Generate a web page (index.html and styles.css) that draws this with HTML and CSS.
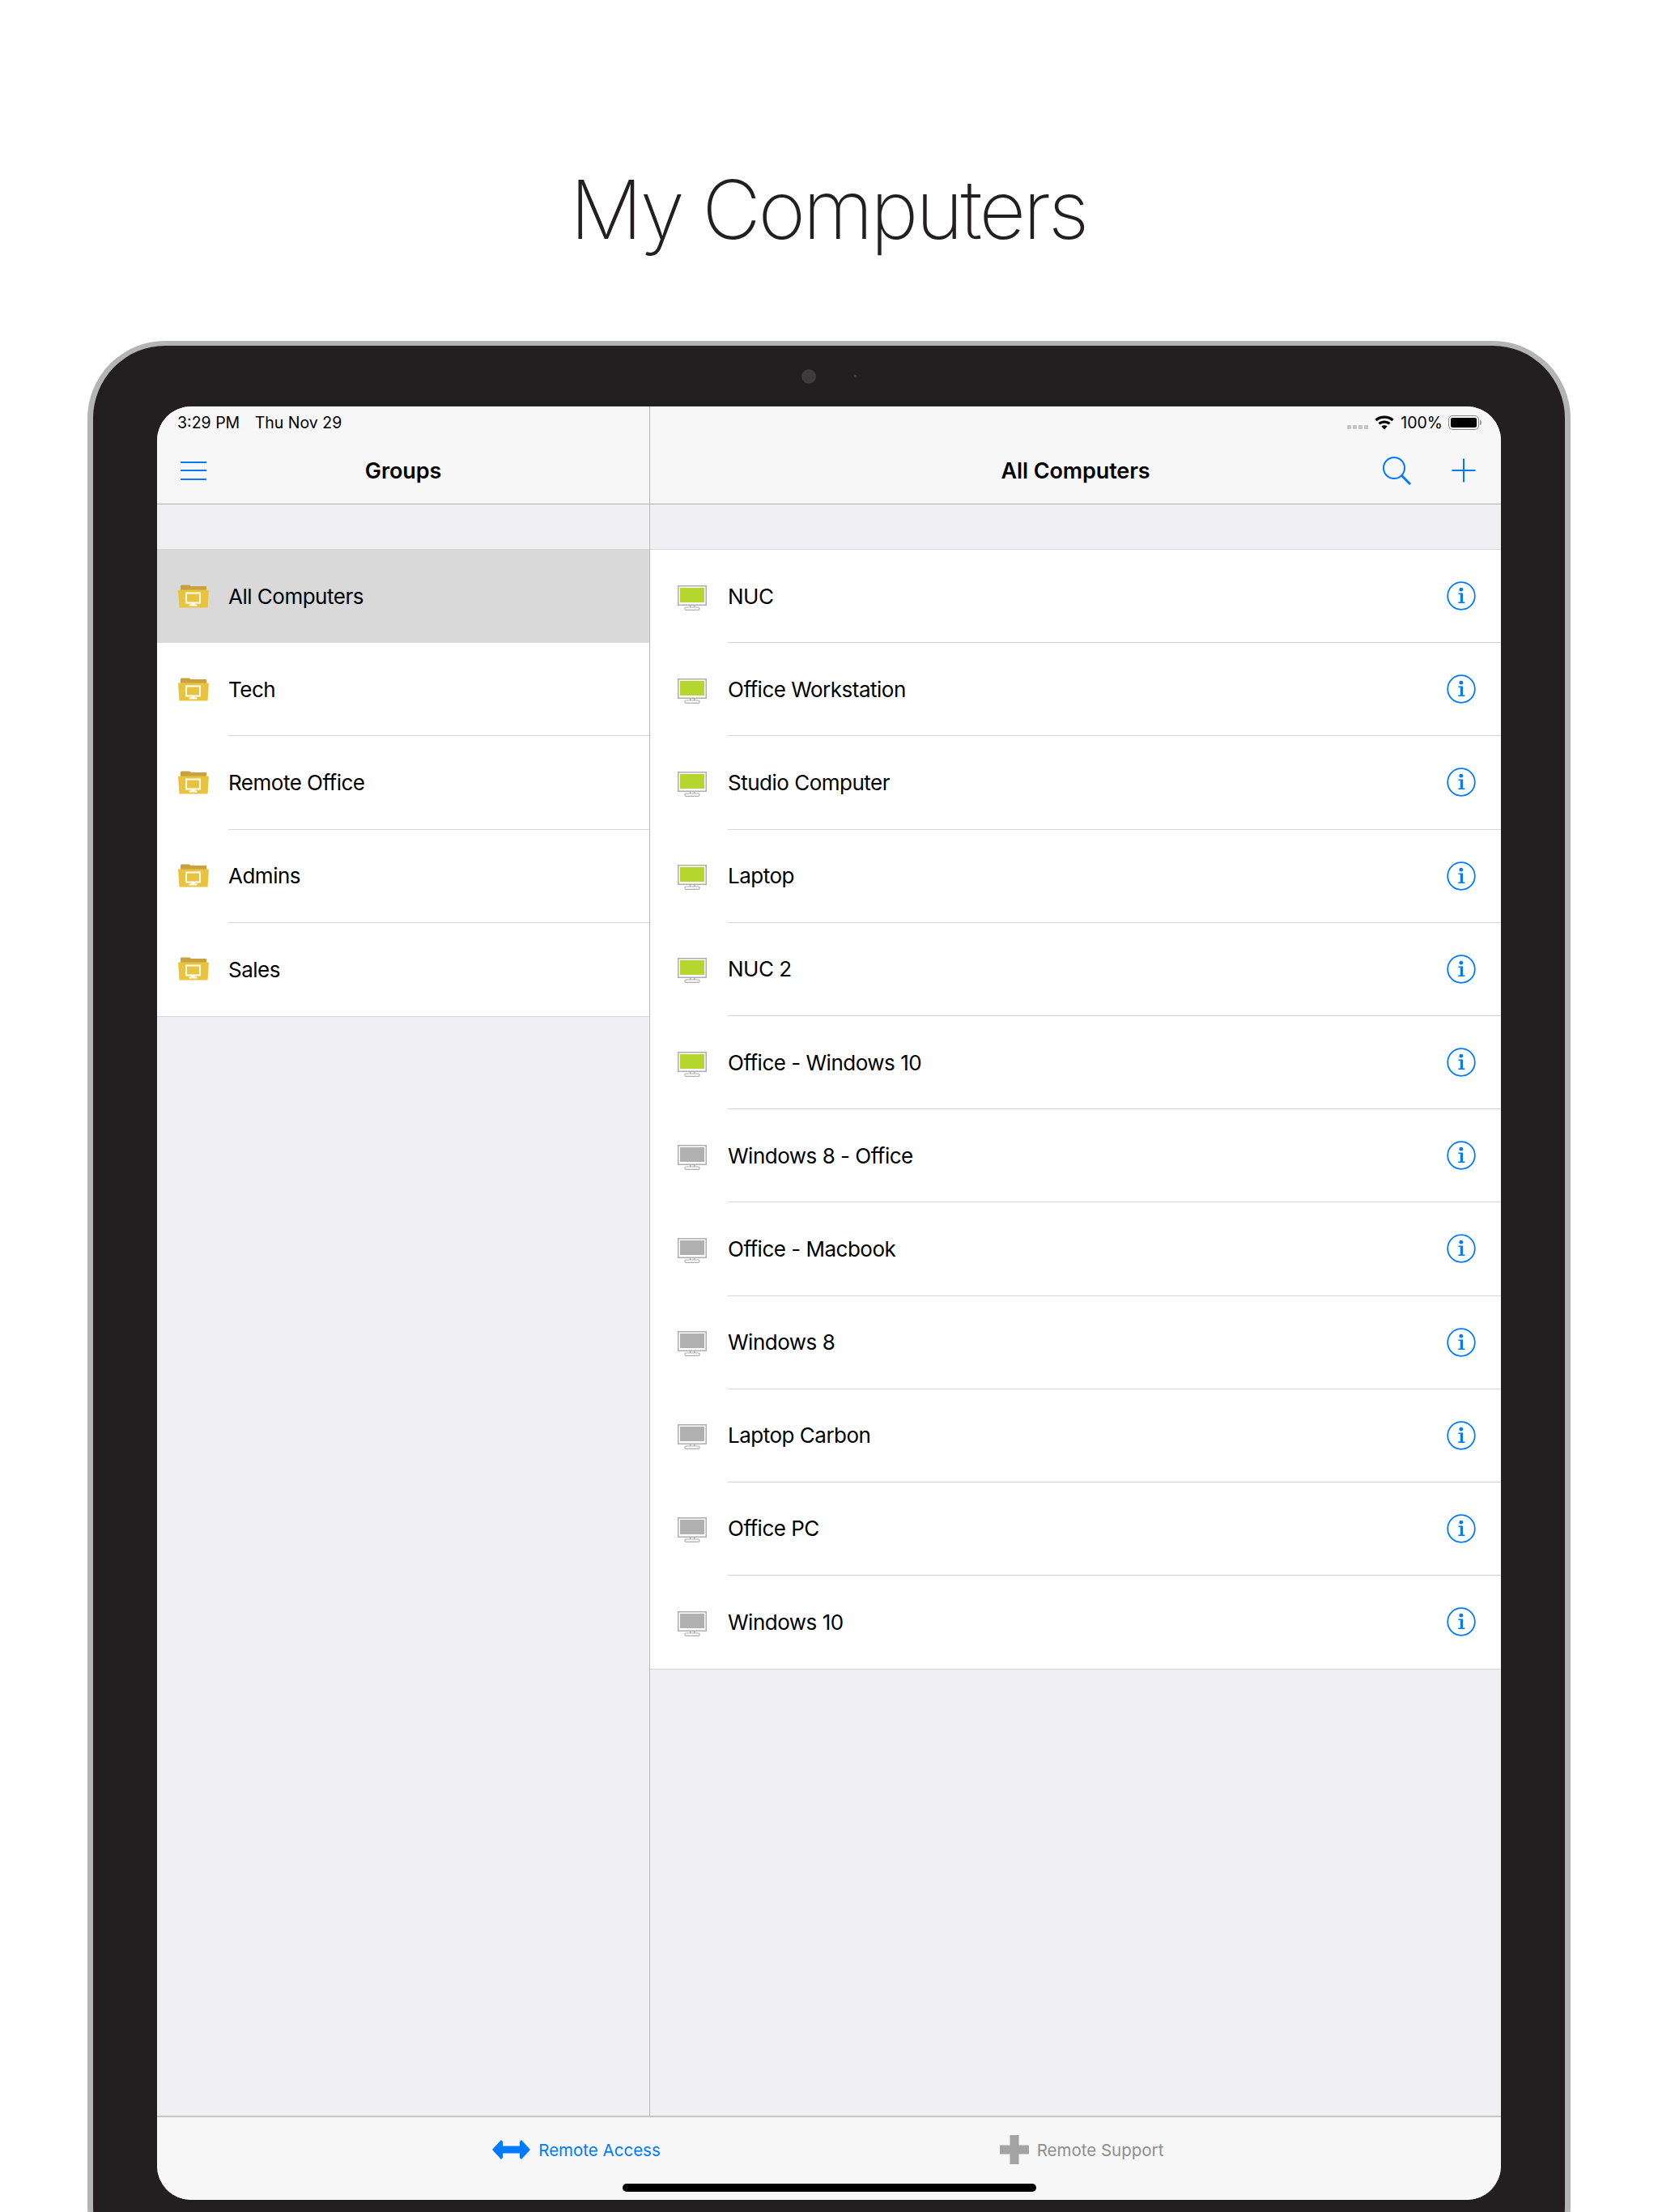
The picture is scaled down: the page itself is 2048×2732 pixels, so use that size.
FILE: index.html
```html
<!DOCTYPE html>
<html lang="en">
<head>
    <meta charset="UTF-8">
    <meta name="viewport" content="width=device-width, initial-scale=1.0">
    <title>My Computers</title>
    <link rel="stylesheet" href="styles.css">
</head>
<body>
    <!-- Shared icons -->
    <svg class="defs" width="0" height="0">
        <symbol id="monitor" viewBox="0 0 36 31">
            <rect x="0.75" y="0.75" width="34.5" height="23.5" fill="#fff" stroke="#aeaeae" stroke-width="1.5"/>
            <rect x="3" y="3" width="30" height="18" fill="currentColor"/>
            <rect x="15" y="25" width="1.5" height="3" fill="#aeaeae"/>
            <rect x="20" y="25" width="1.5" height="3" fill="#aeaeae"/>
            <rect x="9" y="27" width="18" height="3.4" rx="1.5" fill="#fff" stroke="#aeaeae" stroke-width="1.2"/>
        </symbol>
        <symbol id="folder" viewBox="0 0 38 30">
            <path d="M3 8V1.5L4 0.5H14L16 2H35V8Z" fill="#c9a23f"/>
            <path d="M0 6.5H38L36.5 28.5H1.5Z" fill="#e9c33d"/>
            <rect x="10" y="10.5" width="17" height="12" fill="#e9c33d" stroke="#fff" stroke-width="2"/>
            <rect x="16.5" y="23" width="4" height="2" fill="#fff"/>
            <rect x="13.5" y="24.5" width="10" height="2" fill="#fff"/>
        </symbol>
        <symbol id="info" viewBox="0 0 36 36">
            <circle cx="18" cy="18" r="16.8" fill="none" stroke="currentColor" stroke-width="1.8"/>
            <circle cx="17.8" cy="10.2" r="2.4" fill="currentColor"/>
            <path d="M14.4 14.4H20V25.4H22.4V27H14.2V25.4H16.8V16H14.4Z" fill="currentColor"/>
        </symbol>
    </svg>

    <h1 class="page-title">My Computers</h1>

    <div class="device">
        <div class="bezel-top">
            <span class="camera"></span>
            <span class="sensor"></span>
        </div>

        <div class="screen">
            <div class="split">
                <!-- Groups column -->
                <section class="pane pane-groups">
                    <header class="pane-head">
                        <div class="status">
                            <span class="status-time">3:29 PM</span>
                            <span>Thu Nov 29</span>
                        </div>
                        <div class="nav">
                            <div class="nav-side">
                                <span class="hamburger"><i></i><i></i><i></i></span>
                            </div>
                            <div class="nav-title">Groups</div>
                            <div class="nav-side"></div>
                        </div>
                    </header>
                    <ul class="list list-groups">
                        <li class="row selected"><svg class="folder-icon"><use href="#folder"/></svg><span class="row-label">All Computers</span></li>
                        <li class="row"><svg class="folder-icon"><use href="#folder"/></svg><span class="row-label">Tech</span></li>
                        <li class="row"><svg class="folder-icon"><use href="#folder"/></svg><span class="row-label">Remote Office</span></li>
                        <li class="row"><svg class="folder-icon"><use href="#folder"/></svg><span class="row-label">Admins</span></li>
                        <li class="row"><svg class="folder-icon"><use href="#folder"/></svg><span class="row-label">Sales</span></li>
                    </ul>
                </section>

                <!-- Computers column -->
                <section class="pane pane-computers">
                    <header class="pane-head">
                        <div class="status status-right">
                            <span class="signal"><i></i><i></i><i></i><i></i></span>
                            <svg class="wifi" viewBox="0 0 24 18" width="24" height="18">
                                <path d="M12 17.6L8.4 13.6C10.4 11.9 13.6 11.9 15.6 13.6Z" fill="#000"/>
                                <path d="M6.6 11.6L4.4 9.2C8.6 5.6 15.4 5.6 19.6 9.2L17.4 11.6C14.4 9 9.6 9 6.6 11.6Z" fill="#000"/>
                                <path d="M2.6 7.2L0.4 4.8C6.8 -0.8 17.2 -0.8 23.6 4.8L21.4 7.2C16.2 2.6 7.8 2.6 2.6 7.2Z" fill="#000"/>
                            </svg>
                            <span class="battery-text">100%</span>
                            <span class="battery"><i></i></span>
                            <span class="battery-nub"></span>
                        </div>
                        <div class="nav">
                            <div class="nav-side"></div>
                            <div class="nav-title">All Computers</div>
                            <div class="nav-side nav-actions">
                                <svg class="search-icon" viewBox="0 0 36 36" width="36" height="36">
                                    <circle cx="15" cy="15" r="13" fill="none" stroke="#007aff" stroke-width="2"/>
                                    <path d="M24.5 24.5L35 35" fill="none" stroke="#007aff" stroke-width="3"/>
                                </svg>
                                <svg class="plus-icon" viewBox="0 0 30 30" width="30" height="30">
                                    <path d="M15 0.5V29.5M0.5 15H29.5" fill="none" stroke="#007aff" stroke-width="2"/>
                                </svg>
                            </div>
                        </div>
                    </header>
                    <ul class="list list-computers">
                        <li class="row online"><svg class="monitor-icon"><use href="#monitor"/></svg><span class="row-label">NUC</span><svg class="info-icon"><use href="#info"/></svg></li>
                        <li class="row online"><svg class="monitor-icon"><use href="#monitor"/></svg><span class="row-label">Office Workstation</span><svg class="info-icon"><use href="#info"/></svg></li>
                        <li class="row online"><svg class="monitor-icon"><use href="#monitor"/></svg><span class="row-label">Studio Computer</span><svg class="info-icon"><use href="#info"/></svg></li>
                        <li class="row online"><svg class="monitor-icon"><use href="#monitor"/></svg><span class="row-label">Laptop</span><svg class="info-icon"><use href="#info"/></svg></li>
                        <li class="row online"><svg class="monitor-icon"><use href="#monitor"/></svg><span class="row-label">NUC 2</span><svg class="info-icon"><use href="#info"/></svg></li>
                        <li class="row online"><svg class="monitor-icon"><use href="#monitor"/></svg><span class="row-label">Office - Windows 10</span><svg class="info-icon"><use href="#info"/></svg></li>
                        <li class="row"><svg class="monitor-icon"><use href="#monitor"/></svg><span class="row-label">Windows 8 - Office</span><svg class="info-icon"><use href="#info"/></svg></li>
                        <li class="row"><svg class="monitor-icon"><use href="#monitor"/></svg><span class="row-label">Office - Macbook</span><svg class="info-icon"><use href="#info"/></svg></li>
                        <li class="row"><svg class="monitor-icon"><use href="#monitor"/></svg><span class="row-label">Windows 8</span><svg class="info-icon"><use href="#info"/></svg></li>
                        <li class="row"><svg class="monitor-icon"><use href="#monitor"/></svg><span class="row-label">Laptop Carbon</span><svg class="info-icon"><use href="#info"/></svg></li>
                        <li class="row"><svg class="monitor-icon"><use href="#monitor"/></svg><span class="row-label">Office PC</span><svg class="info-icon"><use href="#info"/></svg></li>
                        <li class="row"><svg class="monitor-icon"><use href="#monitor"/></svg><span class="row-label">Windows 10</span><svg class="info-icon"><use href="#info"/></svg></li>
                    </ul>
                </section>
            </div>

            <!-- Tab bar -->
            <footer class="tabbar">
                <div class="tabs">
                    <div class="tab tab-active">
                        <svg viewBox="0 0 47 24" width="47" height="24">
                            <path d="M0 12L11 0L13 2V7.5H34V2L36 0L47 12L36 24L34 22V16.5H13V22L11 24Z" fill="#007aff"/>
                        </svg>
                        <span>Remote Access</span>
                    </div>
                    <div class="tab">
                        <svg viewBox="0 0 36 36" width="36" height="36">
                            <path d="M12.5 0H23.5V12.5H36V23.5H23.5V36H12.5V23.5H0V12.5H12.5Z" fill="#a3a3a3"/>
                        </svg>
                        <span>Remote Support</span>
                    </div>
                </div>
                <div class="home-bar"></div>
            </footer>
        </div>
    </div>
</body>
</html>
```

FILE: styles.css
```css
* {
    box-sizing: border-box;
}

html, body {
    height: 2732px;
}

body {
    margin: 0;
    overflow: hidden;
    background-color: #fff;
    color: #000;
    font-family: 'Inter', 'Liberation Sans', sans-serif;
}

.defs {
    display: block;
}

.page-title {
    height: 120px;
    margin: 199px 0 102px;
    padding-right: 2px;
    color: #231f20;
    font-size: 100px;
    font-weight: 200;
    line-height: 120px;
    letter-spacing: -3.3px;
    text-align: center;
}

/* Device frame */
.device {
    width: 1832px;
    height: 2400px;
    margin-left: 108px;
    padding: 0 79px;
    background-color: #231f20;
    border-style: solid;
    border-color: #b3b5b4;
    border-width: 6px 7px;
    border-radius: 96px;
}

.bezel-top {
    height: 75px;
    display: flex;
    align-items: center;
    justify-content: center;
    gap: 47px;
}

.camera {
    width: 18px;
    height: 18px;
    border-radius: 50%;
    background-color: #3d3b3c;
}

.sensor {
    width: 3px;
    height: 3px;
    border-radius: 50%;
    background-color: #4a4849;
}

.screen {
    height: 2215px;
    display: flex;
    flex-direction: column;
    overflow: hidden;
    background-color: #efeff4;
    border-radius: 42px;
}

.split {
    flex: 1;
    min-height: 0;
    display: flex;
}

.pane-groups {
    width: 609px;
    border-right: 1px solid #b8b8ba;
}

.pane-computers {
    flex: 1;
}

/* Status and nav bars */
.pane-head {
    height: 121px;
    background-color: #f7f7f8;
    border-bottom: 1px solid #b2b2b4;
}

.status {
    height: 38px;
    padding: 1px 0 0 25px;
    display: flex;
    align-items: center;
    gap: 18.5px;
    font-size: 19.5px;
}

.status-right {
    justify-content: flex-end;
    gap: 0;
    padding-right: 24px;
}

.signal {
    display: flex;
    gap: 2px;
    margin: 12px 8px 0 0;
}

.signal i {
    width: 5px;
    height: 5px;
    border-radius: 1px;
    background-color: #c4c4c4;
}

.wifi {
    margin-right: 8px;
}

.battery-text {
    margin-right: 7px;
}

.battery {
    width: 38px;
    height: 18px;
    padding: 2px;
    border: 1.5px solid #888;
    border-radius: 5px;
}

.battery i {
    display: block;
    height: 100%;
    background-color: #000;
    border-radius: 2px;
}

.battery-nub {
    width: 2px;
    height: 6px;
    margin-left: 1px;
    background-color: #999;
    border-radius: 0 2px 2px 0;
}

.nav {
    height: 82px;
    display: grid;
    grid-template-columns: 1fr auto 1fr;
    align-items: center;
}

.nav-title {
    font-size: 27px;
    font-weight: 600;
    letter-spacing: -0.1px;
}

.hamburger {
    display: flex;
    flex-direction: column;
    gap: 8.5px;
    width: 32px;
    margin-left: 29px;
}

.hamburger i {
    display: block;
    height: 2px;
    background-color: #007aff;
}

.nav-actions {
    display: flex;
    justify-content: flex-end;
    align-items: center;
    gap: 50px;
    padding-right: 31px;
}

.plus-icon {
    margin-top: -1px;
}

/* Lists */
.list {
    margin: 55px 0 0;
    padding: 0;
    list-style: none;
    background-color: #fff;
    border-bottom: 1px solid #d6d6d8;
}

.list-groups {
    border-top: 1px solid #d9d9d9;
}

.list-computers {
    border-top: 1px solid #dcdcde;
}

.row {
    height: 115.2px;
    display: flex;
    align-items: center;
    font-size: 26px;
    letter-spacing: -0.5px;
    position: relative;
}

.row-label {
    flex: 1;
    align-self: stretch;
    display: flex;
    align-items: center;
    border-bottom: 1px solid #d6d6d8;
}

.row:last-child .row-label {
    border-bottom: 0;
}

.list-groups .row {
    padding-left: 26px;
}

.list-computers .row {
    padding-left: 34px;
    color: #b0b0b0;
}

.list-computers .row.online {
    color: #b5d62f;
}

.list-computers .row-label {
    color: #000;
    margin-left: 26px;
}

.selected {
    background-color: #d9d9d9;
}

.selected .row-label {
    border-bottom-color: transparent;
}

.folder-icon {
    width: 38px;
    height: 30px;
    flex: none;
    margin-right: 24px;
}

.monitor-icon {
    width: 36px;
    height: 31px;
    flex: none;
    margin-top: 3px;
}

.info-icon {
    position: absolute;
    right: 31px;
    top: 39px;
    width: 36px;
    height: 36px;
    color: #007aff;
}

/* Tab bar */
.tabbar {
    height: 104px;
    flex: none;
    display: flex;
    flex-direction: column;
    align-items: center;
    background-color: #f7f7f8;
    border-top: 2px solid #c6c6c8;
}

.tabs {
    height: 80px;
    margin-bottom: 2px;
    display: grid;
    grid-template-columns: 624px 624px;
    justify-items: center;
    align-items: center;
}

.tab {
    display: flex;
    align-items: center;
    gap: 10px;
    color: #8e8e8e;
    font-size: 20.5px;
}

.tab-active {
    color: #007aff;
}

.home-bar {
    width: 511px;
    height: 10px;
    background-color: #000;
    border-radius: 5px;
}
```
